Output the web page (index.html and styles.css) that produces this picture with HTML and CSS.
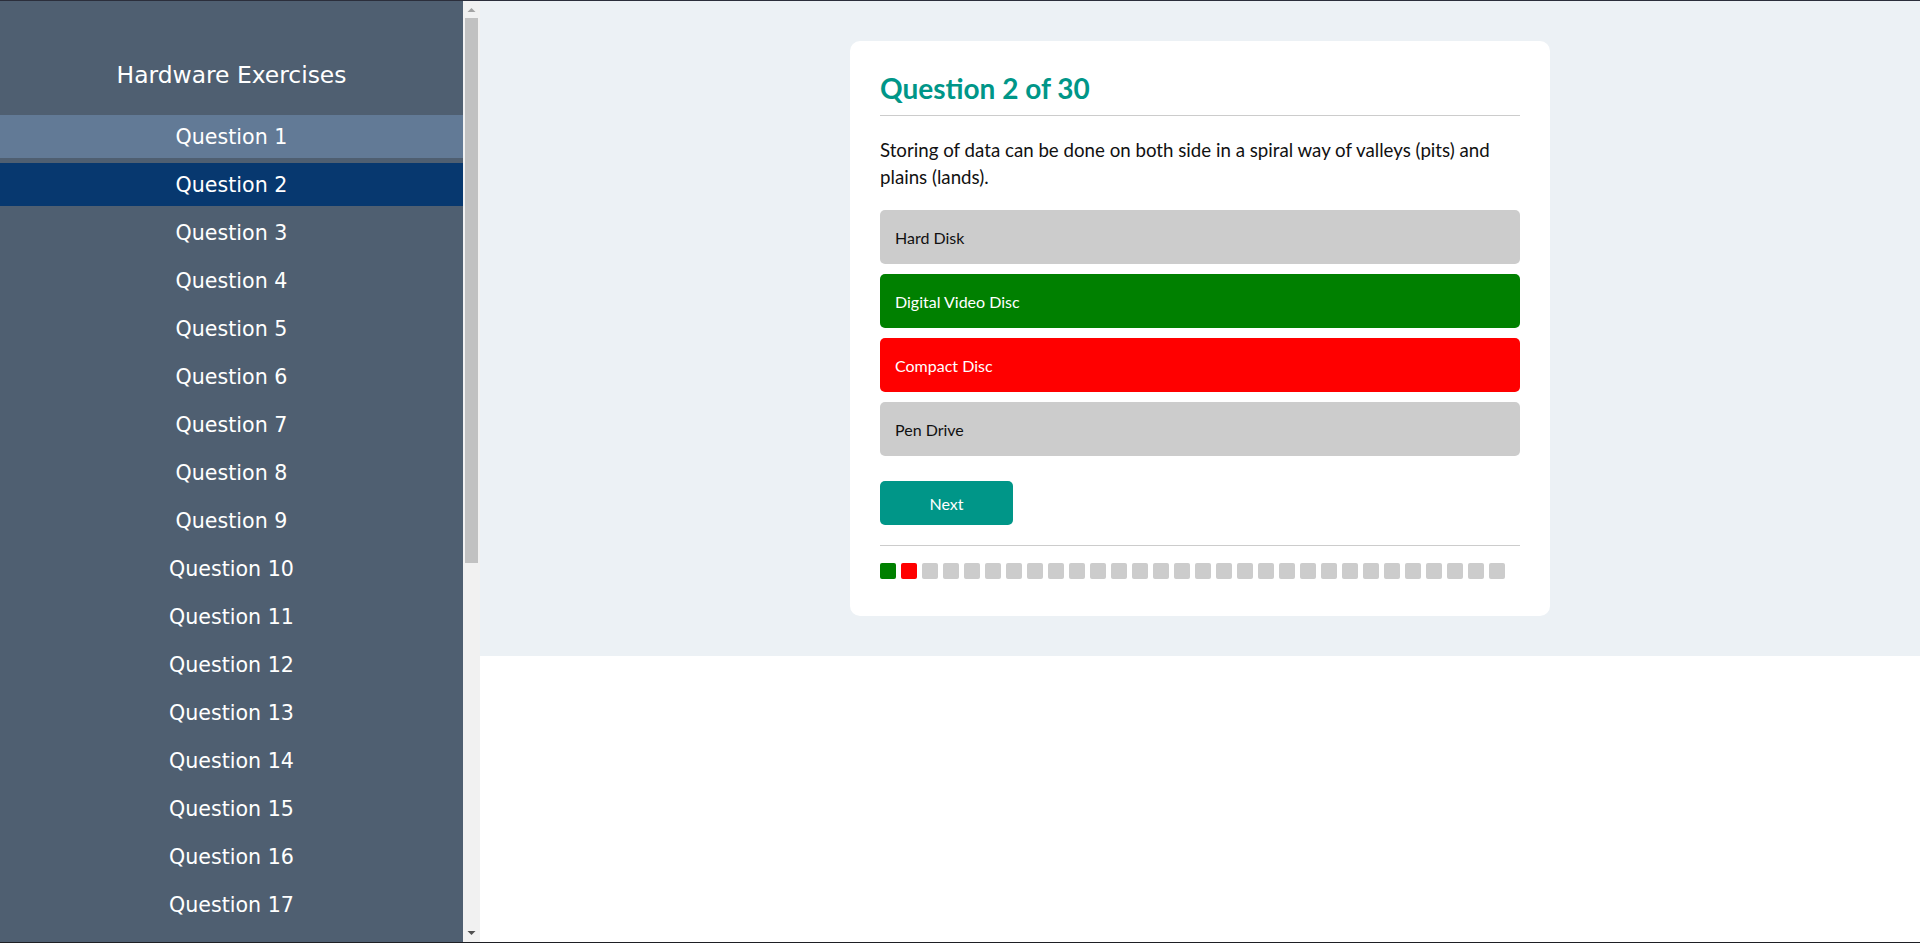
FILE: index.html
```html
<!DOCTYPE html>
<html lang="en">
<head>
<meta charset="utf-8">
<title>Hardware Exercises</title>
<link rel="stylesheet" href="styles.css">
</head>
<body>
<div class="app">
  <aside class="sidebar">
    <nav class="sidebar-panel">
      <h1 class="sidebar-title">Hardware Exercises</h1>
      <ul class="qlist">
        <li class="qitem qitem-hover">Question 1</li>
        <li class="qitem qitem-active">Question 2</li>
        <li class="qitem">Question 3</li>
        <li class="qitem">Question 4</li>
        <li class="qitem">Question 5</li>
        <li class="qitem">Question 6</li>
        <li class="qitem">Question 7</li>
        <li class="qitem">Question 8</li>
        <li class="qitem">Question 9</li>
        <li class="qitem">Question 10</li>
        <li class="qitem">Question 11</li>
        <li class="qitem">Question 12</li>
        <li class="qitem">Question 13</li>
        <li class="qitem">Question 14</li>
        <li class="qitem">Question 15</li>
        <li class="qitem">Question 16</li>
        <li class="qitem">Question 17</li>
      </ul>
    </nav>
    <div class="scrollbar">
      <svg class="sb-arrow" width="17" height="17" viewBox="0 0 17 17"><path d="M4.5 11 L8.5 7 L12.5 11 Z" fill="#a3a3a3"/></svg>
      <div class="sb-track"><div class="sb-thumb"></div></div>
      <svg class="sb-arrow" width="17" height="17" viewBox="0 0 17 17"><path d="M4.5 6 L8.5 10 L12.5 6 Z" fill="#505050"/></svg>
    </div>
  </aside>
  <main class="main">
    <section class="stage">
      <div class="card">
        <h2 class="card-title">Question 2 of 30</h2>
        <p class="question">Storing of data can be done on both side in a spiral way of valleys (pits) and plains (lands).</p>
        <div class="options">
          <div class="option">Hard Disk</div>
          <div class="option option-correct">Digital Video Disc</div>
          <div class="option option-wrong">Compact Disc</div>
          <div class="option">Pen Drive</div>
        </div>
        <button class="next-btn">Next</button>
        <div class="progress">
          <span class="dot dot-correct"></span>
          <span class="dot dot-wrong"></span>
          <span class="dot"></span><span class="dot"></span><span class="dot"></span><span class="dot"></span>
          <span class="dot"></span><span class="dot"></span><span class="dot"></span><span class="dot"></span>
          <span class="dot"></span><span class="dot"></span><span class="dot"></span><span class="dot"></span>
          <span class="dot"></span><span class="dot"></span><span class="dot"></span><span class="dot"></span>
          <span class="dot"></span><span class="dot"></span><span class="dot"></span><span class="dot"></span>
          <span class="dot"></span><span class="dot"></span><span class="dot"></span><span class="dot"></span>
          <span class="dot"></span><span class="dot"></span><span class="dot"></span><span class="dot"></span>
        </div>
      </div>
    </section>
  </main>
</div>
</body>
</html>
```

FILE: styles.css
```css
* { box-sizing: border-box; }

html, body {
  margin: 0;
  padding: 0;
  height: 943px;
  overflow: hidden;
}

body {
  border-top: 1px solid #2b2e3b;
  border-bottom: 1px solid #1e1f24;
  background: #ffffff;
}

.app {
  display: flex;
  height: 941px;
}

.sidebar {
  display: flex;
  width: 480px;
  flex: 0 0 480px;
  height: 100%;
}

.sidebar-panel {
  width: 463px;
  height: 100%;
  overflow: hidden;
  background: #4f5f71;
  padding-top: 59px;
  font-family: "DejaVu Sans", sans-serif;
  color: #ffffff;
}

.sidebar-title {
  margin: 0 0 25px;
  font-size: 23.4px;
  font-weight: 400;
  line-height: 30px;
  text-align: center;
}

.qlist {
  list-style: none;
  margin: 0;
  padding: 0;
}

.qitem {
  height: 43px;
  line-height: 45px;
  margin-bottom: 5px;
  text-align: center;
  font-size: 20.6px;
}

.qitem-hover { background: #627a96; }
.qitem-active { background: #07386f; }

.scrollbar {
  width: 17px;
  display: flex;
  flex-direction: column;
  background: #f1f1f1;
}

.sb-arrow { display: block; flex: 0 0 17px; }

.sb-track {
  flex: 1;
  padding: 0 2px;
}

.sb-thumb {
  height: 545px;
  margin-top: 0;
  background: #c1c1c1;
}

.main {
  flex: 1;
  background: #ffffff;
  font-family: "Lato", "Open Sans", sans-serif;
}

.stage {
  background: #ecf1f5;
  padding: 40px 0;
  display: flex;
  justify-content: center;
}

.card {
  width: 700px;
  background: #ffffff;
  border-radius: 10px;
  padding: 30px 30px 37px;
}

.card-title {
  margin: 0;
  padding-bottom: 10px;
  border-bottom: 1px solid #cccccc;
  color: #009688;
  font-size: 28px;
  font-weight: 700;
  line-height: 34px;
}

.question {
  margin: 21px 0 19px;
  font-size: 18.7px;
  line-height: 27px;
  color: #111111;
}

.options {
  display: flex;
  flex-direction: column;
  gap: 10px;
}

.option {
  height: 54px;
  display: flex;
  align-items: center;
  padding: 0 15px;
  border-radius: 5px;
  background: #cccccc;
  color: #111111;
  font-size: 16px;
}

.option-correct { background: #008000; color: #ffffff; }
.option-wrong { background: #ff0000; color: #ffffff; }

.next-btn {
  display: block;
  margin-top: 25px;
  width: 133px;
  height: 44px;
  border: 0;
  border-radius: 5px;
  background: #009688;
  color: #ffffff;
  font-family: inherit;
  font-size: 16px;
}

.progress {
  margin-top: 20px;
  padding-top: 17px;
  border-top: 1px solid #cccccc;
  display: flex;
  gap: 5px;
}

.dot {
  width: 16px;
  height: 16px;
  border-radius: 2px;
  background: #cccccc;
}

.dot-correct { background: #008000; }
.dot-wrong { background: #ff0000; }
```
